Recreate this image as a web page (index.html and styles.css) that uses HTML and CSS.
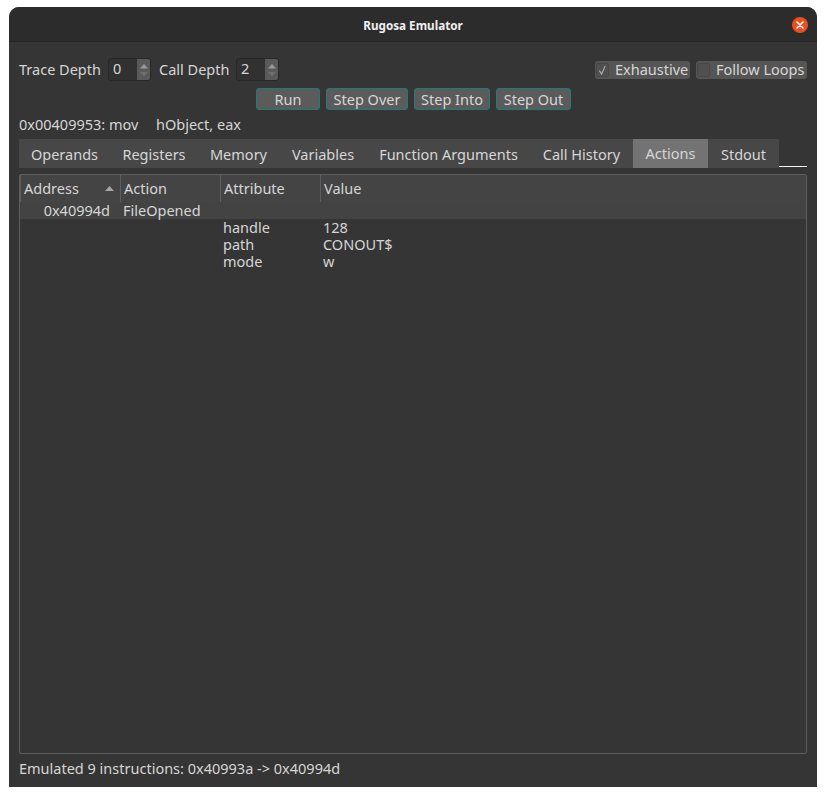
FILE: index.html
```html
<!DOCTYPE html>
<html lang="en">
<head>
<meta charset="utf-8">
<title>Rugosa Emulator</title>
<link rel="stylesheet" href="styles.css">
</head>
<body>
<div class="window">
  <header class="titlebar">
    <span class="title">Rugosa Emulator</span>
    <span class="close">
      <svg width="16" height="16" viewBox="0 0 16 16"><circle cx="8" cy="8" r="8" fill="#e9501f"/><path d="M5 5l6 6M11 5l-6 6" stroke="#fff" stroke-width="1.6" stroke-linecap="round" fill="none"/></svg>
    </span>
  </header>
  <main class="content">
    <div class="options">
      <span class="label">Trace Depth</span>
      <div class="spin">
        <span class="spin-value">0</span>
        <span class="spin-btns">
          <svg width="10" height="18" viewBox="0 0 10 18"><path d="M1 7.500L5 3l4 4.500z" fill="#9a9a9a"/><path d="M1 11l4 4.500 4-4.500z" fill="#6e6e6e"/></svg>
        </span>
      </div>
      <span class="label label-call">Call Depth</span>
      <div class="spin">
        <span class="spin-value">2</span>
        <span class="spin-btns">
          <svg width="10" height="18" viewBox="0 0 10 18"><path d="M1 7.500L5 3l4 4.500z" fill="#9a9a9a"/><path d="M1 11l4 4.500 4-4.500z" fill="#6e6e6e"/></svg>
        </span>
      </div>
      <div class="checks">
        <div class="check check-ex">
          <span class="box"><svg width="12" height="12" viewBox="0 0 12 12"><path d="M2.500 6.500L5 10.500 9 1.500" stroke="#b4b4b4" stroke-width="1.200" fill="none"/></svg></span>
          <span class="check-text">Exhaustive</span>
        </div>
        <div class="check check-loop">
          <span class="box"></span>
          <span class="check-text">Follow Loops</span>
        </div>
      </div>
    </div>
    <div class="actions">
      <button class="btn btn-run">Run</button>
      <button class="btn btn-over">Step Over</button>
      <button class="btn btn-into">Step Into</button>
      <button class="btn btn-out">Step Out</button>
    </div>
    <div class="instruction"><span class="addr">0x00409953: mov</span><span class="ops">hObject, eax</span></div>
    <nav class="tabbar">
      <div class="tabs">
        <span class="tab t1">Operands</span>
        <span class="tab t2">Registers</span>
        <span class="tab t3">Memory</span>
        <span class="tab t4">Variables</span>
        <span class="tab t5">Function Arguments</span>
        <span class="tab t6">Call History</span>
        <span class="tab t7 active">Actions</span>
        <span class="tab t8">Stdout</span>
      </div>
      <div class="tabline"></div>
    </nav>
    <section class="pane">
      <div class="grid head">
        <div class="hcell">Address<svg class="sort" width="9" height="5" viewBox="0 0 9 5"><path d="M0 5L4.500 0 9 5z" fill="#a5a5a5"/></svg></div>
        <div class="hcell">Action</div>
        <div class="hcell">Attribute</div>
        <div class="hcell">Value</div>
      </div>
      <div class="grid row parent">
        <div class="cell right">0x40994d</div>
        <div class="cell">FileOpened</div>
        <div class="cell"></div>
        <div class="cell"></div>
      </div>
      <div class="grid row"><div class="cell"></div><div class="cell"></div><div class="cell">handle</div><div class="cell">128</div></div>
      <div class="grid row"><div class="cell"></div><div class="cell"></div><div class="cell">path</div><div class="cell">CONOUT$</div></div>
      <div class="grid row"><div class="cell"></div><div class="cell"></div><div class="cell">mode</div><div class="cell">w</div></div>
    </section>
    <footer class="status">Emulated 9 instructions: 0x40993a -&gt; 0x40994d</footer>
  </main>
</div>
</body>
</html>
```
FILE: styles.css
```css
html, body { margin: 0; padding: 0; background: #fff; }
body { width: 826px; height: 796px; overflow: hidden; font-family: "Noto Sans", sans-serif; font-size: 14.5px; color: #d6d6d6; }
.window { margin: 7px 0 0 9px; width: 808px; height: 780px; background: #353535; border-radius: 10px 10px 0 0; display: flex; flex-direction: column; overflow: hidden; }
.titlebar { height: 35px; flex: none; background: #2c2c2c; display: flex; align-items: center; justify-content: center; position: relative; border-bottom: 1px solid #252525; box-sizing: border-box; padding-top: 2px; }
.title { font-weight: 700; font-size: 11.700px; color: #f0f0f0; }
.close { position: absolute; right: 9px; top: 10px; width: 16px; height: 16px; display: block; }
.close svg { display: block; }
.content { flex: 1; display: flex; flex-direction: column; padding: 16px 10px 0; min-height: 0; }
.options { display: flex; align-items: center; height: 23px; }
.label { width: 89px; white-space: nowrap; margin-bottom: 2px; }
.label-call { width: 77px; margin-left: 8px; }
.spin { width: 43px; height: 23px; box-sizing: border-box; border: 1px solid #282828; border-radius: 3px; background: #313131; display: flex; }
.spin-value { flex: 1; padding-left: 4px; line-height: 19px; }
.spin-btns { width: 13px; background: #5a5a5a; border-radius: 0 2px 2px 0; display: flex; align-items: center; justify-content: center; }
.checks { margin-left: auto; display: flex; gap: 6px; }
.check { height: 18px; background: #555; border-radius: 3px; display: flex; align-items: center; box-sizing: border-box; white-space: nowrap; }
.check-ex { width: 95px; }
.check-loop { width: 111px; }
.check-text { margin-bottom: 2px; }
.box { width: 13px; height: 14px; flex: none; margin: 0 6px 0 1px; border: 1px solid #474747; background: #505050; box-sizing: border-box; border-radius: 2px; display: flex; align-items: center; justify-content: center; }
.actions { display: flex; justify-content: flex-start; gap: 6px; height: 22px; margin: 7px 0 0 237px; }
.btn { height: 22px; padding: 0; font: inherit; color: #d6d6d6; background: #5b5b5b; border: 1px solid #1f7a78; border-radius: 3px; line-height: 20px; white-space: nowrap; }
.btn-run { width: 64px; }
.btn-over { width: 82px; }
.btn-into { width: 76px; }
.btn-out { width: 75px; }
.instruction { height: 18px; margin-top: 6px; line-height: 17px; white-space: pre; }
.addr { display: inline-block; width: 137px; }
.tabbar { display: flex; align-items: flex-end; margin-top: 5px; height: 29px; flex: none; }
.tabs { display: flex; height: 29px; background: #474747; }
.tab { height: 29px; line-height: 31px; text-align: center; white-space: nowrap; box-sizing: border-box; }
.t1 { width: 91px; }
.t2 { width: 88px; }
.t3 { width: 81px; }
.t4 { width: 88px; }
.t5 { width: 163px; }
.t6 { width: 103px; }
.t7 { width: 75px; }
.t8 { width: 71px; }
.active { background: #737373; line-height: 29px; }
.tabline { width: 28px; height: 1px; background: #f5f5f5; margin-bottom: 1px; }
.pane { flex: none; height: 580px; margin-top: 6px; width: 788px; box-sizing: border-box; border: 1px solid #5e5e5e; border-radius: 2px; }
.grid { display: grid; grid-template-columns: 100px 100px 100px 1fr; }
.head { height: 27px; background: #444; }
.hcell { position: relative; line-height: 27px; padding-left: 3px; border-left: 1px solid #5e5e5e; box-sizing: border-box; }
.sort { position: absolute; right: 6px; top: 11px; }
.row { height: 17px; line-height: 17px; }
.parent { background: #434343; }
.cell { padding-left: 3px; white-space: nowrap; box-sizing: border-box; }
.right { text-align: right; padding-right: 10px; }
.status { height: 33px; line-height: 29px; }
```
